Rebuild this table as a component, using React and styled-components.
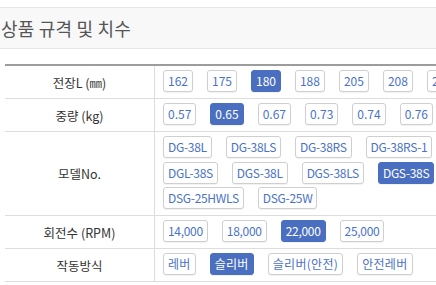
import React from "react";
import styled, { createGlobalStyle } from "styled-components";

const GlobalStyle = createGlobalStyle`
  html, body {
    margin: 0;
    padding: 0;
    background: #fff;
    overflow: hidden;
  }
  body {
    font-family: "Noto Sans CJK KR", "Noto Sans", sans-serif;
  }
`;

const Page = styled.div`
  width: 520px;
  padding-top: 7px;
`;

const Header = styled.div`
  height: 40px;
  display: flex;
  align-items: center;
  padding-left: 1px;
  background: #f8f8f8;
  border-top: 1px solid #e6e6e6;
  border-bottom: 1px solid #e6e6e6;
  font-size: 18px;
  color: #555;
  letter-spacing: 0.2px;
`;

const Table = styled.div`
  margin: 15px 0 0 5px;
  width: 495px;
  border-top: 2px solid #9c9c9c;
`;

const Row = styled.div`
  display: grid;
  grid-template-columns: 150px 1fr;
  border-bottom: 1px solid #dddddd;
`;

const Label = styled.div`
  display: flex;
  align-items: center;
  justify-content: center;
  border-right: 1px solid #dddddd;
  font-size: 12.5px;
  color: #333;
`;

const Unit = styled.span`
  font-family: "Noto Sans CJK KR", sans-serif;
  color: #333;
`;

const Options = styled.div`
  display: flex;
  flex-wrap: wrap;
  column-gap: 14px;
  row-gap: 3.5px;
  padding: 4px 0 6px 8px;
  letter-spacing: ${(p) => p.$spacing || "0"};
`;

const Option = styled.button`
  box-sizing: border-box;
  height: 22px;
  padding: 0 4px;
  border: 1px solid ${(p) => (p.$active ? "#4a6fc0" : "#cfcfcf")};
  border-radius: 3px;
  background: ${(p) => (p.$active ? "#4a6fc0" : "#fff")};
  color: ${(p) => (p.$active ? "#fff" : "#4a72c8")};
  font-family: "Noto Sans CJK KR", "Noto Sans", sans-serif;
  font-size: 12px;
  line-height: 20px;
  letter-spacing: inherit;
  white-space: nowrap;
  box-shadow: 0 1px 1px rgba(0, 0, 0, 0.06);
  cursor: pointer;
`;

const specs = [
  {
    key: "length",
    label: (
      <>
        전장L <Unit>(㎜)</Unit>
      </>
    ),
    items: ["162", "175", "180", "188", "205", "208", "210"],
    active: "180",
  },
  {
    key: "weight",
    label: "중량 (kg)",
    items: ["0.57", "0.65", "0.67", "0.73", "0.74", "0.76"],
    active: "0.65",
  },
  {
    key: "model",
    label: "모델No.",
    spacing: "-0.3px",
    items: [
      "DG-38L",
      "DG-38LS",
      "DG-38RS",
      "DG-38RS-1",
      "DGL-38S",
      "DGS-38L",
      "DGS-38LS",
      "DGS-38S",
      "DSG-25HWLS",
      "DSG-25W",
    ],
    active: "DGS-38S",
  },
  {
    key: "rpm",
    label: "회전수 (RPM)",
    spacing: "-0.3px",
    items: ["14,000", "18,000", "22,000", "25,000"],
    active: "22,000",
  },
  {
    key: "mode",
    label: "작동방식",
    spacing: "0.3px",
    items: ["레버", "슬리버", "슬리버(안전)", "안전레버"],
    active: "슬리버",
  },
];

const App = () => {
  return (
    <Page>
      <GlobalStyle />
      <Header>상품 규격 및 치수</Header>
      <Table>
        {specs.map((spec) => (
          <Row key={spec.key}>
            <Label>
              <span>{spec.label}</span>
            </Label>
            <Options $spacing={spec.spacing}>
              {spec.items.map((item) => (
                <Option key={item} $active={item === spec.active}>
                  {item}
                </Option>
              ))}
            </Options>
          </Row>
        ))}
      </Table>
    </Page>
  );
};

export default App;
